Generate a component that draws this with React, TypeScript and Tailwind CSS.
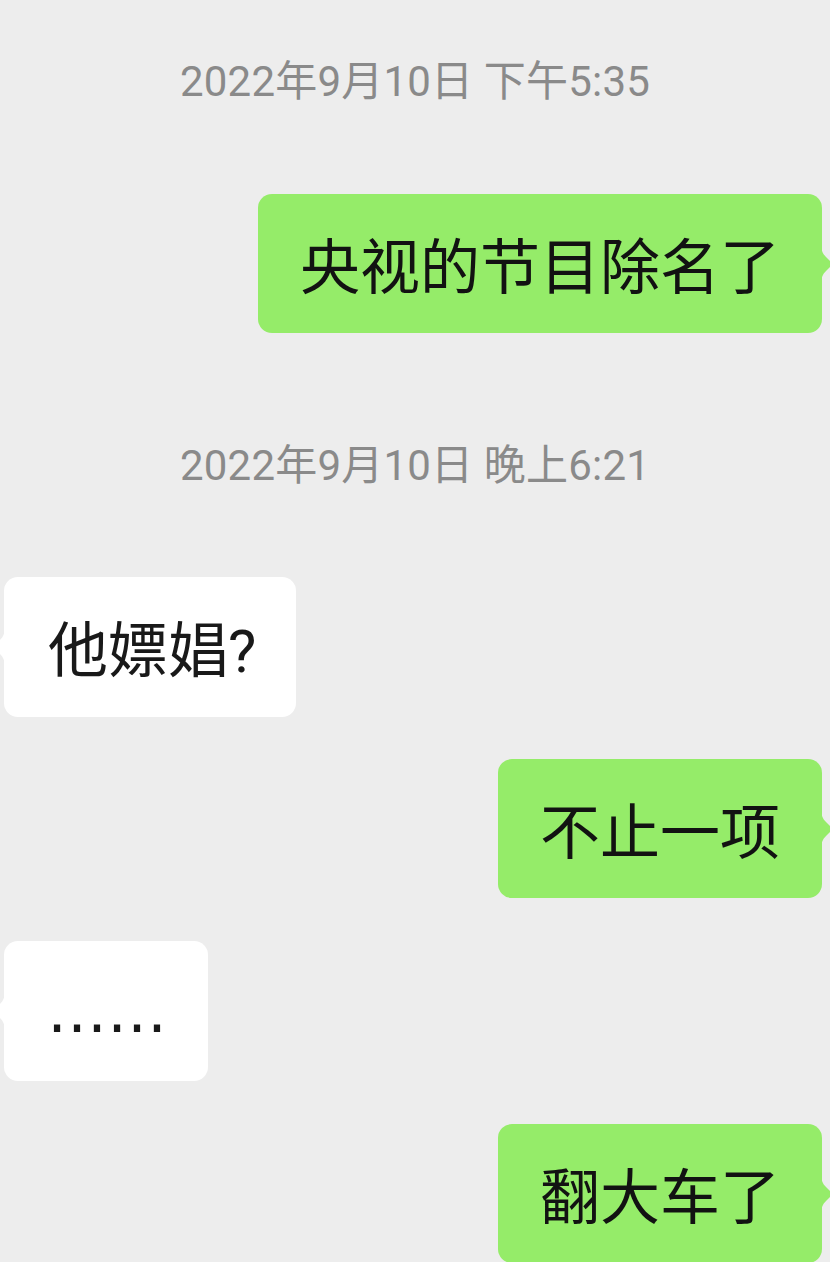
import React from "react";

const FONT = 'Roboto, "Noto Sans CJK SC", sans-serif';

function Tail({ side, color }: { side: "left" | "right"; color: string }) {
  const d =
    side === "right"
      ? "M0 0 C0 9 2 12 5 15 L10 20 Q12.5 22 10 24 L5 29 C2 32 0 35 0 44 Z"
      : "M12 0 C12 9 10 12 7 15 L2 20 Q-0.5 22 2 24 L7 29 C10 32 12 35 12 44 Z";
  return (
    <svg
      width="12"
      height="44"
      viewBox="0 0 12 44"
      className={
        side === "right"
          ? "absolute left-full top-1/2 -translate-y-1/2 -ml-px"
          : "absolute right-full top-1/2 -translate-y-1/2 -mr-px"
      }
    >
      <path d={d} fill={color} />
    </svg>
  );
}

function Mine({ text, className = "" }: { text: string; className?: string }) {
  return (
    <div className={`flex justify-end pr-[8px] ${className}`}>
      <div className="relative h-[139px] px-[42px] pt-[10px] flex items-center rounded-[14px] bg-[#95ec69] text-[60px] leading-none text-[#121212]" style={{ fontFamily: FONT }}>
        {text}
        <Tail side="right" color="#95ec69" />
      </div>
    </div>
  );
}

function Theirs({ children, className = "", font = FONT, pad = "pl-[44px] pr-[42px]" }: { children: React.ReactNode; className?: string; font?: string; pad?: string }) {
  return (
    <div className={`flex justify-start pl-[4px] ${className}`}>
      <div className={`relative h-[140px] ${pad} pt-[10px] flex items-center rounded-[14px] bg-white text-[60px] leading-none text-[#191919]`} style={{ fontFamily: font }}>
        {children}
        <Tail side="left" color="#ffffff" />
      </div>
    </div>
  );
}

function Stamp({ text, className = "" }: { text: string; className?: string }) {
  return (
    <div className={`text-center text-[42px] leading-[50px] text-[#8a8a8a] tracking-[0.2px] ${className}`} style={{ fontFamily: FONT }}>
      {text}
    </div>
  );
}

export default function App() {
  return (
    <div className="w-[830px] h-[1262px] overflow-hidden bg-[#ededed] flex flex-col">
      <Stamp text="2022年9月10日 下午5:35" className="mt-[57px]" />
      <Mine text="央视的节目除名了" className="mt-[87px]" />
      <Stamp text="2022年9月10日 晚上6:21" className="mt-[108px]" />
      <Theirs className="mt-[86px]" pad="pl-[44px] pr-[40px]">他嫖娼?</Theirs>
      <Mine text="不止一项" className="mt-[42px]" />
      <Theirs className="mt-[43px]" font='"DejaVu Sans", sans-serif' pad="pl-[43px] pr-[41px]">
        <span className="text-[60px] pb-[10px]">……</span>
      </Theirs>
      <Mine text="翻大车了" className="mt-[43px]" />
    </div>
  );
}
